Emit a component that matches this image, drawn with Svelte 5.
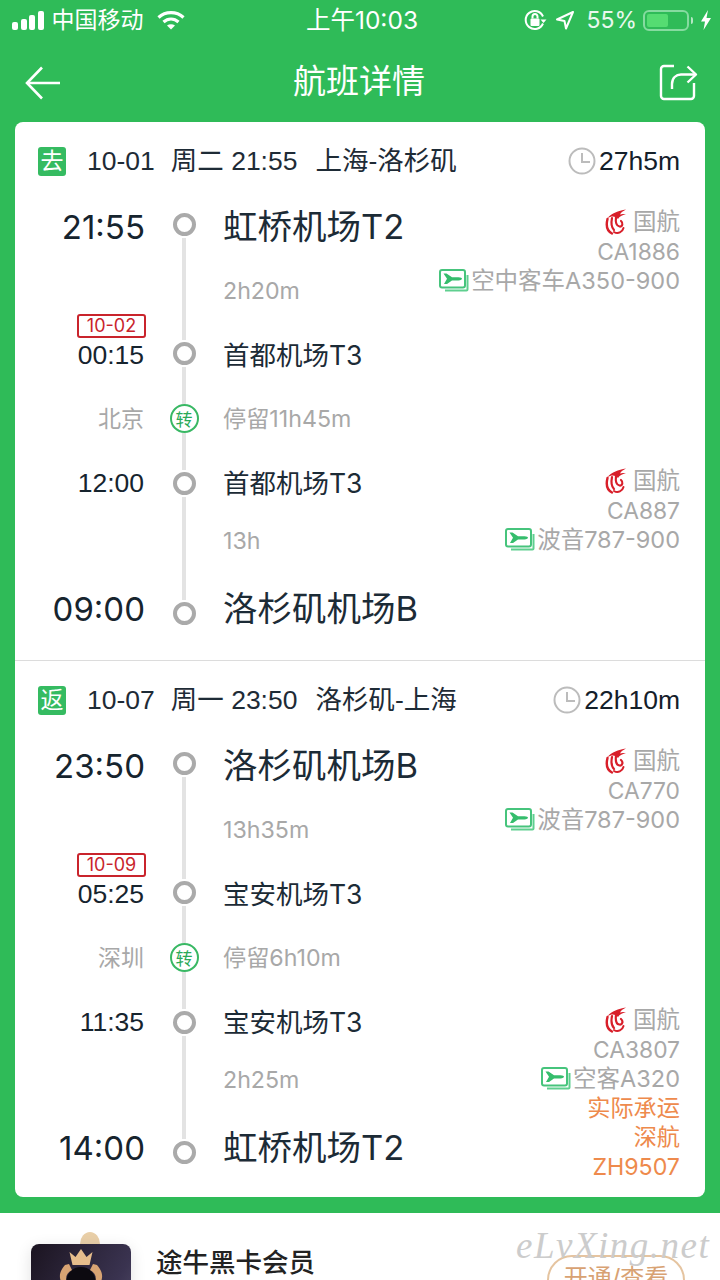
<script>
  const trips = [
    {
      tag: '去', head: ['10-01', '周二 21:55', '上海-洛杉矶'], total: '27h5m',
      dep: ['21:55', '虹桥机场T2'], dur1: '2h20m', dateTag: '10-02',
      mid1: ['00:15', '首都机场T3'], city: '北京', stop: '停留11h45m',
      mid2: ['12:00', '首都机场T3'], dur2: '13h', arr: ['09:00', '洛杉矶机场B'],
      c1: { no: 'CA1886', plane: '空中客车A350-900' },
      c2: { no: 'CA887', plane: '波音787-900' }
    },
    {
      tag: '返', head: ['10-07', '周一 23:50', '洛杉矶-上海'], total: '22h10m',
      dep: ['23:50', '洛杉矶机场B'], dur1: '13h35m', dateTag: '10-09',
      mid1: ['05:25', '宝安机场T3'], city: '深圳', stop: '停留6h10m',
      mid2: ['11:35', '宝安机场T3'], dur2: '2h25m', arr: ['14:00', '虹桥机场T2'],
      c1: { no: 'CA770', plane: '波音787-900' },
      c2: { no: 'CA3807', plane: '空客A320', shared: ['实际承运', '深航', 'ZH9507'] }
    }
  ];
</script>

{#snippet carrier(c, cls)}
  <div class="carrier {cls}">
    <div class="line">
      <svg class="logo" width="22" height="26" viewBox="0 0 22 26" fill="none" stroke="#d81f2a" stroke-linecap="round">
        <path d="M2.500 10C1 16 2 22 7 24.500" stroke-width="2.400" />
        <path d="M7 9c-1 5-1 9 2 12" stroke-width="2.200" />
        <path d="M11 8c-.5 4 0 9 3.500 9.500 3 .5 4-3.500 1.500-5.500" stroke-width="2.200" />
        <path d="M9 23c4 2.500 8.500 0 9.500-4" stroke-width="2" />
        <path d="M2.500 9C7 4 13 2 21 .5 18 2 16 3.500 15 5.500c2-.7 4-.7 6 0-4 .5-6.500 2-8 4.500-2-3-6.500-3.500-10.500-1z" fill="#d81f2a" stroke="none" />
      </svg>
      <span class="air">国航</span>
    </div>
    <div class="line no">{c.no}</div>
    <div class="line">
      <svg class="ticket" width="30" height="23" viewBox="0 0 30 23" fill="none">
        <path d="M6 21.500h21.500a1 1 0 0 0 1-1V6" stroke="#5fcf8f" stroke-width="2" />
        <rect x="1" y="1" width="25" height="17.500" rx="2" stroke="#46c47c" stroke-width="2" fill="#fff" />
        <path d="M4.500 4.500h3l5.500 3.700h6.500c2.300 0 3.500.8 3.500 1.600s-1.200 1.600-3.500 1.600h-6.500l-5 3.600h-3l3-5.200z" fill="#35bd6c" />
      </svg>
      <span>{c.plane}</span>
    </div>
    {#if c.shared}
      {#each c.shared as s}<div class="line orange">{s}</div>{/each}
    {/if}
  </div>
{/snippet}

<div class="page">
  <header class="top">
    <div class="status">
      <div class="st-left">
        <span class="bars"><i></i><i></i><i></i><i></i></span>
        <span>中国移动</span>
        <svg width="30" height="22" viewBox="0 0 30 22" fill="none" stroke="#fff" stroke-width="3.200">
          <path d="M2.500 8.500c7-6.500 18-6.500 25 0" />
          <path d="M7.500 13c4.500-4 10.500-4 15 0" />
          <path d="M15 20.500l-4-4c2.400-1.800 5.600-1.800 8 0z" fill="#fff" stroke="none" />
        </svg>
      </div>
      <div class="st-mid">上午10:03</div>
      <div class="st-right">
        <svg width="26" height="26" viewBox="0 0 26 26" fill="none" stroke="#fff" stroke-width="2">
          <path d="M21 16.500A9 9 0 1 1 21 9.500" />
          <path d="M18.500 12.500h6l-3 3.500z" fill="#fff" stroke="none" />
          <rect x="8.500" y="11.500" width="9" height="7.500" rx="1" fill="#fff" stroke="none" />
          <path d="M10.500 11.500V9.500a2.500 2.500 0 0 1 5 0v2" />
        </svg>
        <svg class="loc" width="20" height="20" viewBox="0 0 20 20" fill="none" stroke="#fff" stroke-width="2" stroke-linejoin="round">
          <path d="M18 2 2 9.500l7.500 1.500 1.500 7.500z" />
        </svg>
        <span class="pct">55%</span>
        <span class="batt"><i></i></span>
        <span class="nub"></span>
        <svg class="bolt" width="12" height="20" viewBox="0 0 12 20"><path d="M8 0 1 11.500h4L3.500 20 11 8H6.500z" fill="#fff" /></svg>
      </div>
    </div>
    <nav class="nav">
      <svg class="back" width="38" height="36" viewBox="0 0 38 36" fill="none" stroke="#fff" stroke-width="2.600">
        <path d="M36 18H3" />
        <path d="M18 2.500 3 18l15 15.500" />
      </svg>
      <h1>航班详情</h1>
      <svg class="share" width="40" height="38" viewBox="0 0 40 38" fill="none" stroke="#fff" stroke-width="2.400" stroke-linejoin="round">
        <path d="M16 3H6a3 3 0 0 0-3 3v27a3 3 0 0 0 3 3h27a3 3 0 0 0 3-3V20" />
        <path d="M14 26v-5c0-6 4-9.500 9-9.500h14" />
        <path d="M29.500 3.500 38 11.500l-8.500 8" />
      </svg>
    </nav>
  </header>

  <main class="card">
    {#each trips as t, i}
      <section class="trip" class:first={i === 0}>
        <div class="head">
          <span class="tag">{t.tag}</span>
          <span class="d">{t.head[0]}</span>
          <span class="d when">{t.head[1]}</span>
          <span class="d">{t.head[2]}</span>
          <span class="total">
            <svg width="28" height="28" viewBox="0 0 28 28" fill="none" stroke="#bcbcbc" stroke-width="2">
              <circle cx="14" cy="14" r="12.500" />
              <path d="M14 6v9h8" />
            </svg>
            {t.total}
          </span>
        </div>
        <div class="grid">
          <div class="rail">
            <span class="ring"></span><span class="ln a"></span>
            <span class="ring"></span><span class="ln b"></span>
            <span class="zhuan">转</span><span class="ln c"></span>
            <span class="ring"></span><span class="ln a last"></span>
            <span class="ring"></span>
          </div>

          <div class="time big r1">{t.dep[0]}</div>
          <div class="place big r1">{t.dep[1]}</div>
          {@render carrier(t.c1, 'r1')}
          <div class="muted r2">{t.dur1}</div>

          <div class="time r3"><span class="date">{t.dateTag}</span>{t.mid1[0]}</div>
          <div class="place r3">{t.mid1[1]}</div>

          <div class="city r4">{t.city}</div>
          <div class="muted r4">{t.stop}</div>

          <div class="time r5">{t.mid2[0]}</div>
          <div class="place r5">{t.mid2[1]}</div>
          {@render carrier(t.c2, 'r5')}
          <div class="muted r6">{t.dur2}</div>

          <div class="time big r7">{t.arr[0]}</div>
          <div class="place big r7">{t.arr[1]}</div>
        </div>
      </section>
    {/each}
  </main>

  <footer class="foot">
    <span class="blob"></span>
    <div class="badge">
      <svg class="crown" width="100" height="40" viewBox="0 0 100 40">
        <circle cx="50" cy="38" r="15" fill="#0c0a10" />
        <path d="M41.500 21l-3-13 6 5 5.500-8 5.500 8 6-5-3 13z" fill="#e6bd8c" />
        <path d="M34 21c-5 6-7 11-3 19h5c-2-7-.5-11 5-14l-3-6z" fill="#d8a473" />
        <path d="M66 21c5 6 7 11 3 19h-5c2-7 .5-11-5-14l3-6z" fill="#d8a473" />
      </svg>
    </div>
    <div class="name">途牛黑卡会员</div>
    <span class="open">开通/查看</span>
    <span class="mark">eLvXing.net</span>
  </footer>
</div>

<style>
  :global(body) { margin: 0; background: #fff; }
  .page {
    width: 720px; height: 1280px; overflow: hidden; position: relative;
    background: #2fbb58; color: #1c2b36;
    font-family: Inter, "Noto Sans CJK SC", sans-serif;
    display: flex; flex-direction: column;
  }
  .top { color: #fff; }
  .status { height: 40px; display: grid; grid-template-columns: 1fr auto 1fr; align-items: center; padding: 0 8px 0 12px; font-size: 23px; line-height: 30px; }
  .st-left { display: flex; align-items: center; gap: 8px; }
  .st-left svg { margin-left: 4px; }
  .bars { display: flex; align-items: flex-end; gap: 2.500px; height: 20px; }
  .bars i { width: 6px; background: #fff; border-radius: 2px; }
  .bars i:nth-child(1) { height: 8px; }
  .bars i:nth-child(2) { height: 11px; }
  .bars i:nth-child(3) { height: 15px; }
  .bars i:nth-child(4) { height: 19px; }
  .st-mid { font-size: 24.500px; }
  .st-right { display: flex; align-items: center; justify-content: flex-end; }
  .loc { margin-left: 7px; }
  .pct { margin-left: 11px; font-size: 23px; color: #e9f8ee; }
  .batt { margin-left: 6px; width: 46px; height: 21px; box-sizing: border-box; border: 2px solid #86dba0; border-radius: 6px; padding: 2px; display: flex; }
  .batt i { width: 21px; background: #55dc72; border-radius: 2px; }
  .nub { width: 2px; height: 7px; background: #b5e8c4; margin-left: 2px; border-radius: 0 2px 2px 0; }
  .bolt { margin-left: 7px; }

  .nav { height: 82px; box-sizing: border-box; display: flex; align-items: center; justify-content: space-between; padding: 0 22px 0 24px; position: relative; }
  .nav h1 { margin: 0 2px 1px 0; font-size: 33px; line-height: 40px; font-weight: 400; }
  .back { margin-top: 3px; }
  .share { margin-top: 1px; }

  .card { margin: 0 15px; height: 1075px; background: #fff; border-radius: 8px; flex: none; overflow: hidden; }
  .trip + .trip { border-top: 1px solid #dcdcdc; }
  .trip { padding-bottom: 14px; }
  .trip:last-child { padding-bottom: 12px; }

  .head { height: 78px; display: flex; align-items: center; padding: 0 25px 0 23px; font-family: "Liberation Sans", "Noto Sans CJK SC", sans-serif; font-size: 26.500px; line-height: 32px; color: #1e2b36; }
  .tag { width: 28px; height: 29px; background: #35bb61; color: #fff; font-size: 23px; border-radius: 3px; display: flex; align-items: center; justify-content: center; margin-right: 21px; }
  .d { margin-right: 16px; }
  .when { margin-right: 18px; }
  .total { margin-left: auto; display: flex; align-items: center; gap: 3px; color: #14202a; }

  .grid { display: grid; grid-template-columns: 129px 80px 1fr; grid-template-rows: 54px 74px 54px 74px 54px 62px 74px; padding-right: 25px; }
  .r1 { grid-row: 1; } .r2 { grid-row: 2; } .r3 { grid-row: 3; } .r4 { grid-row: 4; }
  .r5 { grid-row: 5; } .r6 { grid-row: 6; } .r7 { grid-row: 7; }

  .rail { grid-column: 2; grid-row: 1 / -1; display: flex; flex-direction: column; align-items: center; padding-top: 13px; }
  .ring { width: 23px; height: 23px; box-sizing: border-box; border: 4.500px solid #aaaaaa; border-radius: 50%; flex: none; background: #fff; }
  .ln { width: 4px; background: #e3e3e3; flex: none; }
  .ln.a { height: 102px; margin: 2px 0; }
  .ln.a.last { height: 103px; }
  .ln.b { height: 37px; margin-top: 2px; }
  .ln.c { height: 37px; margin-bottom: 2px; }
  .zhuan { width: 29px; height: 29px; box-sizing: border-box; border: 2px solid #39b864; border-radius: 50%; color: #2aa958; font-size: 17px; display: flex; align-items: center; justify-content: center; background: #fff; flex: none; }

  .time { grid-column: 1; text-align: right; font-family: "Liberation Sans", sans-serif; font-size: 26.500px; line-height: 30px; align-self: center; position: relative; color: #16242e; }
  .time.big { font-family: Inter, sans-serif; font-size: 33px; line-height: 40px; margin-right: -1px; }
  .date { position: absolute; right: -2px; bottom: 32px; width: 69px; height: 24px; box-sizing: border-box; border: 2px solid #c9242c; border-radius: 3px; color: #c9242c; font-family: Inter, sans-serif; font-size: 18px; line-height: 20px; text-align: center; }
  .place { grid-column: 3; font-size: 26.500px; line-height: 30px; align-self: center; color: #1c2b36; margin-left: -1px; }
  .place.big { font-size: 34.500px; line-height: 40px; }
  .muted { grid-column: 3; font-size: 23.200px; line-height: 30px; color: #a8a8a8; align-self: center; margin-left: -1px; }
  .city { grid-column: 1; text-align: right; font-size: 23px; line-height: 30px; color: #a8a8a8; align-self: center; }

  .carrier { grid-column: 3; justify-self: end; align-self: start; margin-top: 7px; font-size: 23.500px; line-height: 29.600px; color: #a8a8a8; text-align: right; z-index: 1; }
  .carrier.r5 { margin-top: 10px; }
  .line { display: flex; align-items: center; justify-content: flex-end; height: 29.600px; white-space: nowrap; }
  .no { font-size: 22.800px; }
  .logo { margin-right: 6px; }
  .ticket { margin-right: 2px; }
  .orange { color: #ee8a4c; font-size: 23.200px; }

  .foot { flex: 1; margin-top: 16px; background: #fff; position: relative; display: flex; align-items: flex-start; }
  .badge { position: absolute; left: 31px; top: 31px; width: 100px; height: 60px; border-radius: 8px; background: linear-gradient(120deg, #1b1420, #3a3350 80%, #4a4460); box-shadow: 0 4px 16px rgba(0,0,0,.12); }
  .blob { position: absolute; left: 80px; top: 19px; width: 20px; height: 24px; border-radius: 50%; background: #e9cfa8; }
  .crown { position: absolute; left: 0; top: 0; }
  .name { margin: 32px 0 0 156px; font-size: 26.500px; line-height: 34px; font-weight: 500; color: #222; }
  .open { position: absolute; left: 547px; top: 42px; width: 138px; height: 50px; box-sizing: border-box; border: 2px solid #e5c4a0; border-radius: 25px; color: #d8a273; font-size: 24px; text-align: center; line-height: 42px; background: #fff; }
  .mark { position: absolute; left: 516px; top: 11px; font-family: "Liberation Serif", serif; font-style: italic; font-size: 37px; letter-spacing: 1.500px; color: #cccccc; white-space: nowrap; }
</style>
